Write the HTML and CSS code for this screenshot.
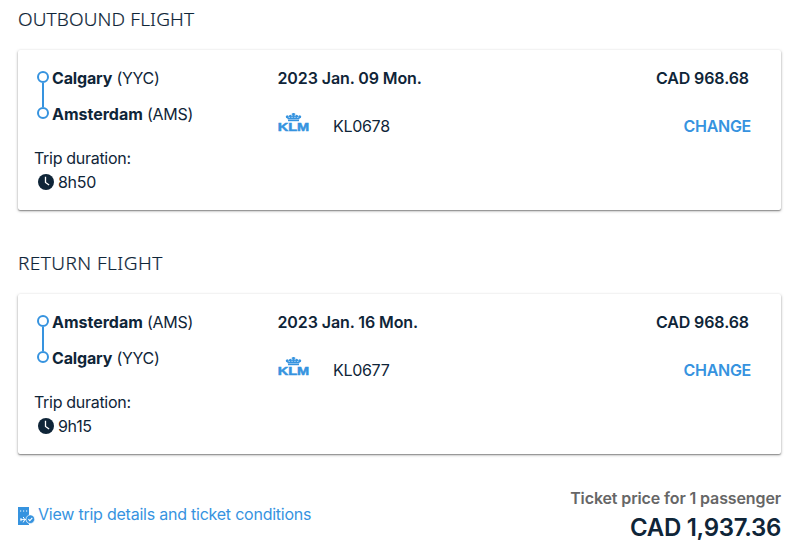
FILE: index.html
```
<!DOCTYPE html>
<html lang="en">
<head>
    <meta charset="UTF-8">
    <meta name="viewport" content="width=device-width, initial-scale=1.0">
    <title>Your flights</title>
    <link rel="stylesheet" href="styles.css">
</head>
<body>
    <svg class="sprite" width="0" height="0">
        <symbol id="clock" viewBox="0 0 16 16">
            <circle cx="8" cy="8" r="8" fill="#0f2538"/>
            <path d="M7.5 2.8v5.6l3.6 2.7" fill="none" stroke="#fff" stroke-width="1.3"/>
        </symbol>
        <symbol id="crown" viewBox="0 0 32 20">
            <g fill="#3693df">
                <rect x="14.5" y="0" width="2" height="3.6"/>
                <rect x="13.7" y=".6" width="3.6" height="1.2"/>
                <circle cx="9.3" cy="3.7" r="1.5"/>
                <circle cx="12.4" cy="3.2" r="1.5"/>
                <circle cx="15.5" cy="3.4" r="1.5"/>
                <circle cx="18.6" cy="3.2" r="1.5"/>
                <circle cx="21.7" cy="3.7" r="1.5"/>
                <path d="M8.7 4h1.3l.8 1.1h1.2l.4-1h.8l.6 1h3.4l.6-1h.8l.4 1h1.2l.8-1.1h1.3L21.1 6.4H9.9z"/>
                <rect x="10" y="6.8" width="11" height="1.4"/>
            </g>
        </symbol>
    </svg>

    <main class="summary">
        <h2 class="title">OUTBOUND FLIGHT</h2>
        <section class="card">
            <div class="route">
                <ul class="stops">
                    <li class="stop"><strong>Calgary</strong> (YYC)</li>
                    <li class="stop"><strong class="wide">Amsterdam</strong> (AMS)</li>
                </ul>
                <div class="duration-label">Trip duration:</div>
                <div class="duration"><svg class="clock"><use href="#clock"/></svg>8h50</div>
            </div>
            <div class="flight">
                <div class="date">2023 Jan. 09 Mon.</div>
                <div class="number">
                    <svg class="klm" viewBox="0 0 32 20">
                        <use href="#crown"/>
                        <text x="-0.3" y="17.6" textLength="31.5" lengthAdjust="spacingAndGlyphs" class="klm-text">KLM</text>
                    </svg>KL0678
                </div>
            </div>
            <div class="price">
                <div class="amount">CAD 968.68</div>
                <a class="change">CHANGE</a>
            </div>
        </section>

        <h2 class="title title-return">RETURN FLIGHT</h2>
        <section class="card">
            <div class="route">
                <ul class="stops">
                    <li class="stop"><strong class="wide">Amsterdam</strong> (AMS)</li>
                    <li class="stop"><strong>Calgary</strong> (YYC)</li>
                </ul>
                <div class="duration-label">Trip duration:</div>
                <div class="duration"><svg class="clock"><use href="#clock"/></svg>9h15</div>
            </div>
            <div class="flight">
                <div class="date">2023 Jan. 16 Mon.</div>
                <div class="number">
                    <svg class="klm" viewBox="0 0 32 20">
                        <use href="#crown"/>
                        <text x="-0.3" y="17.6" textLength="31.5" lengthAdjust="spacingAndGlyphs" class="klm-text">KLM</text>
                    </svg>KL0677
                </div>
            </div>
            <div class="price">
                <div class="amount">CAD 968.68</div>
                <a class="change">CHANGE</a>
            </div>
        </section>

        <footer class="footer">
            <a class="details">
                <svg class="ticket" viewBox="0 0 17 18">
                    <path d="M0 0h11v8.2a4.6 4.6 0 0 0 0 8.6V18H0z" fill="#3693df"/>
                    <path d="M2 4h1.2M5 4h1.2M8 4h1.2" stroke="#fff" stroke-width="1"/>
                    <path d="M2.5 12.6h6M3 11v3.2M5.2 10l1.6 2.6-1.6 2.8" fill="none" stroke="#fff" stroke-width="1"/>
                    <circle cx="12.3" cy="12.2" r="4.3" fill="#3693df" stroke="#fff" stroke-width=".6"/>
                    <path d="M10.4 12.2l1.4 1.4 2.5-2.7" fill="none" stroke="#fff" stroke-width="1.1"/>
                </svg>
                <span class="details-text">View trip details and ticket conditions</span>
            </a>
            <div class="total">
                <div class="total-label">Ticket price for 1 passenger</div>
                <div class="total-amount">CAD 1,937.36</div>
            </div>
        </footer>
    </main>
</body>
</html>
```
FILE: styles.css
```
*, *::before, *::after {
    box-sizing: border-box;
}
body {
    margin: 0;
    background: #fff;
    color: #0f2538;
    font: 16px/24px Inter, sans-serif;
    letter-spacing: -0.3px;
    overflow: hidden;
}
.sprite {
    display: block;
}
.summary {
    width: 763px;
    margin-left: 18px;
}
.title {
    height: 50px;
    margin: 0;
    padding-top: 7px;
    font: 300 19px/24px "Noto Sans", sans-serif;
    letter-spacing: 0.15px;
    -webkit-text-stroke: 0.2px #0f2538;
}
.title-return {
    letter-spacing: 0.45px;
}
.card {
    display: flex;
    height: 160px;
    margin-bottom: 34px;
    padding: 16px;
    border-radius: 2px;
    box-shadow: 0 1px 3px rgba(0, 0, 0, 0.35), 0 1px 1px rgba(0, 0, 0, 0.25);
}
.route {
    width: 243.5px;
}
.stops {
    margin: 0 0 20px;
    padding: 0;
    list-style: none;
}
.stop {
    position: relative;
    padding-left: 18px;
    white-space: nowrap;
}
.stop strong {
    letter-spacing: -0.15px;
}
.stop .wide {
    letter-spacing: 0;
}
.stop + .stop {
    margin-top: 12px;
}
.stop::before {
    content: "";
    position: absolute;
    left: 3px;
    top: 5px;
    width: 12px;
    height: 12px;
    border: 2px solid #3693df;
    border-radius: 50%;
}
.stop:first-child::after {
    content: "";
    position: absolute;
    left: 8px;
    top: 17px;
    width: 2px;
    height: 24px;
    background: #3693df;
}
.duration {
    display: flex;
    align-items: center;
    padding-left: 4px;
}
.clock {
    width: 16px;
    height: 16px;
    margin-right: 4px;
}
.date, .amount, .change {
    font-weight: 600;
}
.date, .amount {
    letter-spacing: -0.1px;
}
.number {
    display: flex;
    margin-top: 24px;
}
.klm {
    width: 32px;
    height: 20px;
    margin: -1px 23.5px 0 0;
}
.klm-text {
    font: bold 11px "Liberation Sans", sans-serif;
    fill: #3693df;
    stroke: #3693df;
    stroke-width: 0.5px;
    letter-spacing: 0;
}
.price {
    margin-left: auto;
    padding-right: 14px;
    text-align: right;
}
.amount {
    padding-right: 2px;
}
.change {
    display: block;
    margin-top: 24px;
    color: #3693df;
}
.footer {
    display: flex;
    justify-content: space-between;
    margin-top: -2px;
}
.details {
    display: flex;
    height: 24px;
    margin-top: 16px;
    color: #3693df;
    letter-spacing: -0.23px;
}
.ticket {
    width: 17px;
    height: 18px;
    margin: 5px 3px 0 0;
}
.total {
    text-align: right;
}
.total-label {
    color: #666;
    font-weight: 600;
    letter-spacing: -0.12px;
}
.total-amount {
    font-size: 24px;
    font-weight: 600;
    line-height: 35px;
}
```
